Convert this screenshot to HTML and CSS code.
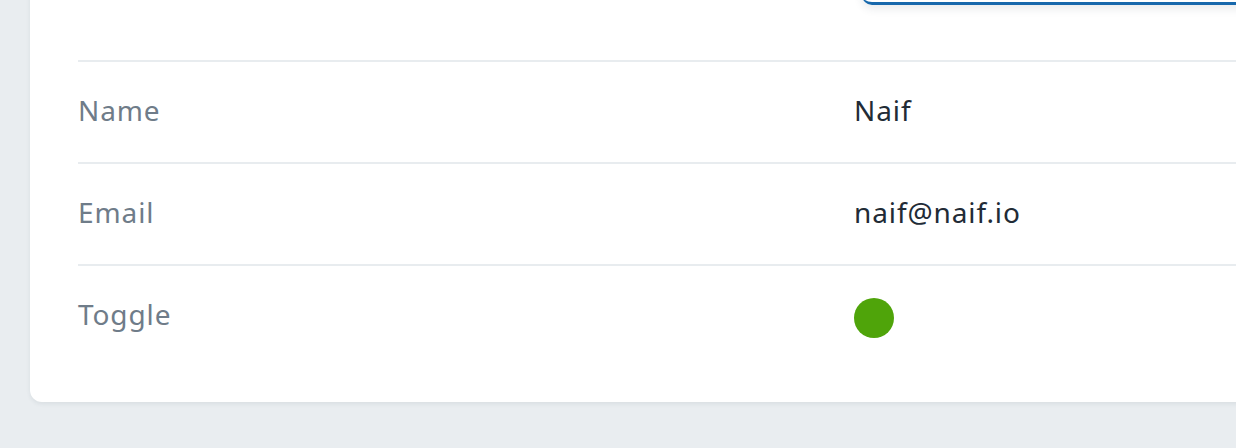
FILE: index.html
```html
<!DOCTYPE html>
<html>
<head>
<meta charset="utf-8">
<link rel="stylesheet" href="styles.css">
</head>
<body>
<div class="card">
  <div class="card-header">
    <div class="action-button"></div>
  </div>
  <div class="row">
    <div class="label">Name</div>
    <div class="value">Naif</div>
  </div>
  <div class="row">
    <div class="label">Email</div>
    <div class="value">naif@naif.io</div>
  </div>
  <div class="row">
    <div class="label">Toggle</div>
    <div class="value"><span class="dot"></span></div>
  </div>
</div>
</body>
</html>
```

FILE: styles.css
```css
html, body {
  margin: 0;
  padding: 0;
}
body {
  background: #e9edf0;
  width: 1236px;
  height: 448px;
  overflow: hidden;
  font-family: "Noto Sans", "Lato", sans-serif;
}
.card {
  background: #ffffff;
  margin: -100px -60px 0 30px;
  padding: 0 0 28px 48px;
  border-radius: 12px;
  box-shadow: 0 2px 4px rgba(40, 60, 80, 0.08);
}
.card-header {
  height: 160px;
  display: flex;
  justify-content: flex-end;
}
.action-button {
  width: 434px;
  height: 60px;
  margin-top: 42px;
  background: #ffffff;
  border-bottom: 3px solid #1768ac;
  border-radius: 0 0 0 10px;
  box-shadow: 0 4px 8px rgba(40, 60, 80, 0.10);
}
.row {
  display: grid;
  grid-template-columns: 776px 1fr;
  border-top: 2px solid #e8ecef;
  padding: 32px 0 36px;
  line-height: 32px;
  font-size: 28px;
  letter-spacing: 0.9px;
}
.label {
  color: #6f7c89;
}
.value {
  color: #222b36;
}
.dot {
  display: block;
  width: 40px;
  height: 40px;
  border-radius: 50%;
  background: #4fa40a;
}
```
